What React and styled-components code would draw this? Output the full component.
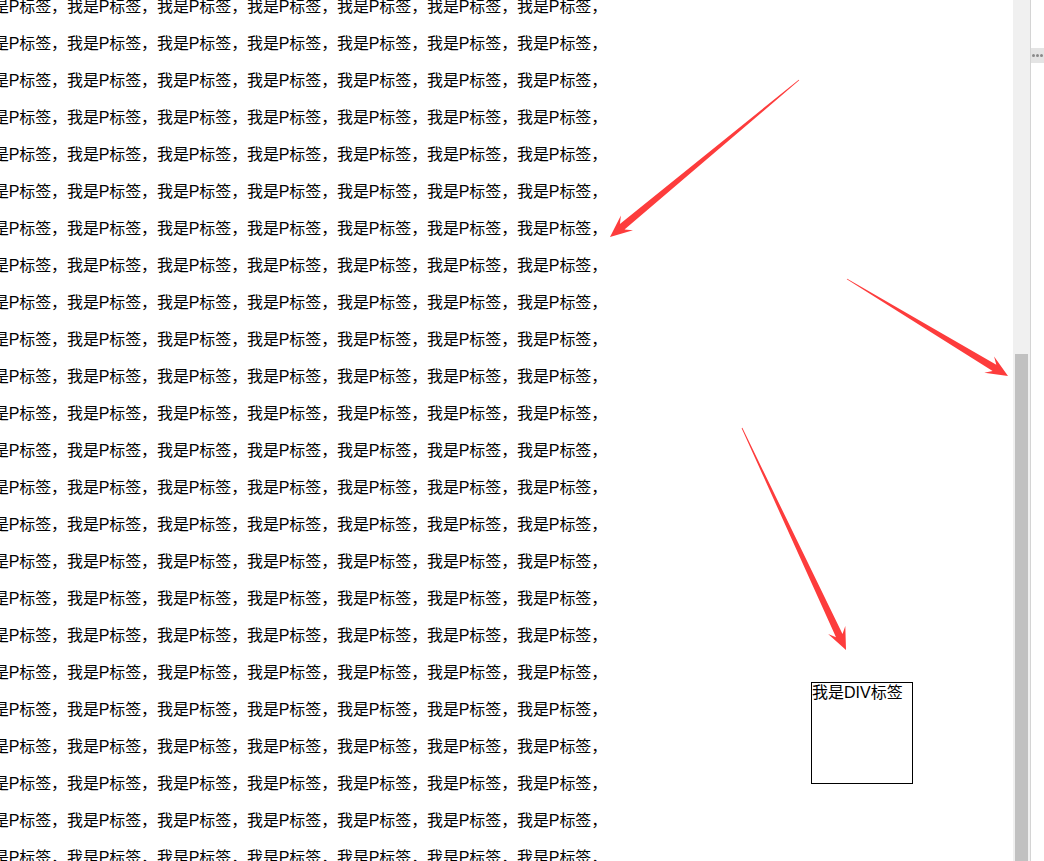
import React from "react";
import styled, { createGlobalStyle } from "styled-components";

const GlobalStyle = createGlobalStyle`
  html, body {
    margin: 0;
    padding: 0;
    height: 100%;
    overflow: hidden;
    background: #fff;
  }
  #root {
    height: 100%;
  }
`;

const ROWS = 25;
const SEGMENTS = 7;

const arrows = [
  { tail: [799, 80], tip: [610, 237] },
  { tail: [847, 279], tip: [1008, 376] },
  { tail: [742, 428], tip: [846, 650] },
];

// tapered arrow: thin at the tail, a notched head at the tip
const arrowPoints = ({ tail, tip }) => {
  const [tx, ty] = tail;
  const [px, py] = tip;
  const len = Math.hypot(px - tx, py - ty);
  const ux = (px - tx) / len;
  const uy = (py - ty) / len;
  const nx = -uy;
  const ny = ux;
  const head = 22;
  const shaft = 3.6;
  const wing = 9.5;
  const at = (back, side) =>
    `${(px - ux * back + nx * side).toFixed(1)},${(py - uy * back + ny * side).toFixed(1)}`;
  return [
    `${tx - nx * 0.4},${ty - ny * 0.4}`,
    `${tx + nx * 0.4},${ty + ny * 0.4}`,
    at(head * 0.72, shaft),
    at(head, wing),
    at(0, 0),
    at(head, -wing),
    at(head * 0.72, -shaft),
  ].join(" ");
};

const App = () => {
  return (
    <Wrapper>
      <GlobalStyle />
      <Viewport>
        <TextBlock>
          {Array.from({ length: ROWS }).map((_, i) => (
            <Para key={i}>{"我是P标签，".repeat(SEGMENTS)}</Para>
          ))}
        </TextBlock>
        <FixedBox>我是DIV标签</FixedBox>
        <Overlay width="1044" height="861" viewBox="0 0 1044 861">
          {arrows.map((a, i) => (
            <polygon key={i} points={arrowPoints(a)} fill="#fd3c3c" />
          ))}
        </Overlay>
      </Viewport>
      <ScrollTrack>
        <ScrollThumb />
      </ScrollTrack>
      <SideStrip>
        <MoreTab>
          <Dot />
          <Dot />
          <Dot />
        </MoreTab>
      </SideStrip>
    </Wrapper>
  );
};

export default App;

const Wrapper = styled.div`
  display: flex;
  height: 100vh;
  width: 100vw;
  overflow: hidden;
  position: relative;
  font-family: "Liberation Sans", "Noto Sans CJK SC", sans-serif;
  color: #000;
`;

const Viewport = styled.main`
  flex: 1;
  overflow: hidden;
`;

const TextBlock = styled.div`
  margin: -4px 0 0 -23px;
  white-space: nowrap;
`;

const Para = styled.p`
  margin: 16px 0;
  font-size: 16px;
  line-height: 21px;
  letter-spacing: -0.111px;

  &:first-child {
    margin-top: 0;
  }
`;

const FixedBox = styled.div`
  position: absolute;
  left: 811px;
  top: 682px;
  width: 100px;
  height: 100px;
  border: 1px solid #000;
  font-size: 16px;
  line-height: 20px;
`;

const Overlay = styled.svg`
  position: absolute;
  left: 0;
  top: 0;
  pointer-events: none;
`;

const ScrollTrack = styled.div`
  width: 18px;
  flex-shrink: 0;
  box-sizing: border-box;
  background: #f0f0f0;
  border-right: 1px solid #d4d4d4;
  display: flex;
  flex-direction: column;
  padding: 354px 2px 0;
`;

const ScrollThumb = styled.div`
  flex: 1;
  background: #c1c1c1;
`;

const SideStrip = styled.div`
  width: 13px;
  flex-shrink: 0;
  background: #fff;
  padding-top: 48px;
`;

const MoreTab = styled.div`
  height: 15px;
  background: #e4e4e4;
  display: flex;
  align-items: center;
  justify-content: center;
  gap: 1px;
`;

const Dot = styled.span`
  width: 3px;
  height: 3px;
  border-radius: 50%;
  background: #8a8a8a;
`;
